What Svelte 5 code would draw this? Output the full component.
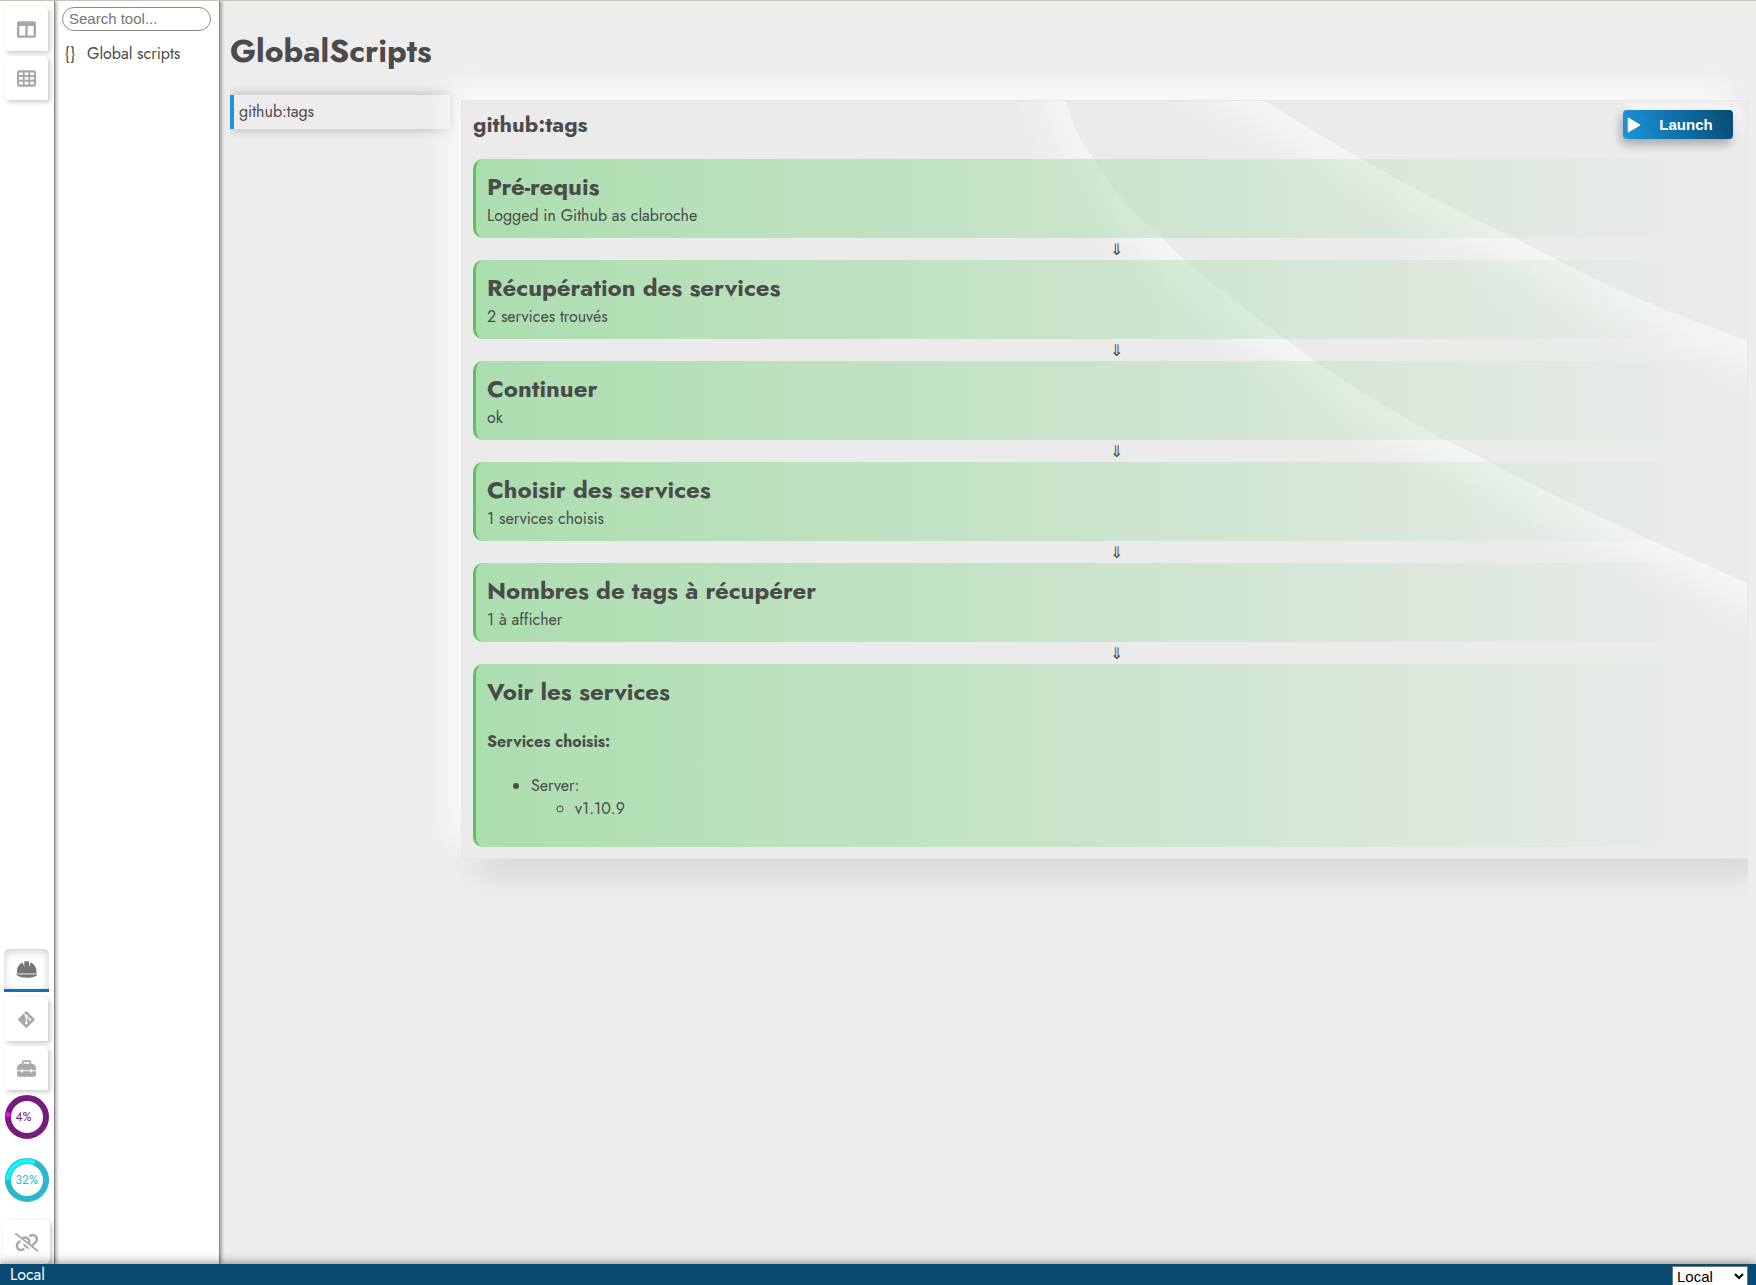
<script>
  const topTools = [
    { id: 'columns', label: 'Columns' },
    { id: 'grid', label: 'Grid' }
  ];
  const bottomTools = [
    { id: 'helmet', label: 'Toolbox', active: true },
    { id: 'git', label: 'Git' },
    { id: 'toolbox', label: 'Tools' }
  ];
  const gauges = [
    { name: 'CPU', value: 4, kind: 'cpu' },
    { name: 'Memory', value: 32, kind: 'mem' }
  ];
  const steps = [
    { title: 'Pré-requis', text: 'Logged in Github as clabroche' },
    { title: 'Récupération des services', text: '2 services trouvés' },
    { title: 'Continuer', text: 'ok' },
    { title: 'Choisir des services', text: '1 services choisis' },
    { title: 'Nombres de tags à récupérer', text: '1 à afficher' }
  ];
  let search = $state('');
  let env = $state('Local');
</script>

{#snippet icon(id)}
  {#if id === 'columns'}
    <svg class="icon" viewBox="0 0 512 512" aria-hidden="true"><path d="M464 32H48C21.49 32 0 53.49 0 80v352c0 26.51 21.49 48 48 48h416c26.51 0 48-21.49 48-48V80c0-26.51-21.49-48-48-48zM224 416H64V160h160v256zm224 0H288V160h160v256z" /></svg>
  {:else if id === 'grid'}
    <svg class="icon" viewBox="0 0 512 512" aria-hidden="true"><path fill-rule="evenodd" d="M64 32h384a64 64 0 0 1 64 64v320a64 64 0 0 1-64 64H64a64 64 0 0 1-64-64V96a64 64 0 0 1 64-64zM56 92v68h100v-68zM206 92v68h100v-68zM356 92v68h100v-68zM56 216v72h100v-72zM206 216v72h100v-72zM356 216v72h100v-72zM56 344v72h100v-72zM206 344v72h100v-72zM356 344v72h100v-72z" /></svg>
  {:else if id === 'helmet'}
    <svg class="icon" viewBox="0 0 576 512" aria-hidden="true"><path d="M248 32h80a24 24 0 0 1 24 24v142l42-134c88 36 156 120 156 230v56H26v-56c0-110 68-194 156-230l42 134V56a24 24 0 0 1 24-24z" /><path opacity=".55" d="M10 350h556v50H10z" /><path d="M0 400h576c-60 56-170 80-288 80S60 456 0 400z" /></svg>
  {:else if id === 'git'}
    <svg class="icon" viewBox="0 0 448 512" aria-hidden="true"><path d="M439.55 236.05L244 40.45a28.87 28.87 0 0 0-40.81 0l-40.66 40.63 51.52 51.52c27.06-9.14 52.68 16.77 43.39 43.68l49.66 49.66c34.23-11.8 61.18 31 35.47 56.69-26.49 26.49-70.21-2.87-56-37.34L240.22 199v121.85c25.3 12.54 22.26 41.85 9.08 55a34.34 34.34 0 0 1-48.55 0c-17.57-17.6-11.07-46.91 11.25-56v-123c-20.8-8.51-24.6-30.74-18.64-45L142.57 101 8.45 235.14a28.86 28.86 0 0 0 0 40.81l195.61 195.6a28.86 28.86 0 0 0 40.8 0l194.69-194.69a28.86 28.86 0 0 0 0-40.81z" /></svg>
  {:else if id === 'toolbox'}
    <svg class="icon" viewBox="0 0 512 512" aria-hidden="true"><path fill-rule="evenodd" d="M184 32h144a56 56 0 0 1 56 56v40h28c18 0 34 7 46 19l35 35c12 12 19 28 19 45v73H400v-12a20 20 0 0 0-40 0v12H152v-12a20 20 0 0 0-40 0v12H0v-73c0-17 7-33 19-45l35-35c12-12 28-19 46-19h28V88a56 56 0 0 1 56-56zM184 80a8 8 0 0 0-8 8v40h160V88a8 8 0 0 0-8-8z" /><path d="M0 332h112v16a20 20 0 0 0 40 0v-16h208v16a20 20 0 0 0 40 0v-16h112v84a64 64 0 0 1-64 64H64a64 64 0 0 1-64-64z" /></svg>
  {/if}
{/snippet}

<div class="app">
  <div class="body">
    <nav class="rail" aria-label="Tools">
      {#each topTools as tool}
        <button class="tile" aria-label={tool.label}>{@render icon(tool.id)}</button>
      {/each}
      <span class="spacer"></span>
      {#each bottomTools as tool}
        <button class="tile" class:active={tool.active} aria-label={tool.label}>{@render icon(tool.id)}</button>
      {/each}
      {#each gauges as g}
        <div class="gauge {g.kind}" role="img" aria-label="{g.name} {g.value}%">
          <svg viewBox="0 0 44 44" aria-hidden="true">
            <circle class="track" cx="22" cy="22" r="19" />
            <circle class="value" cx="22" cy="22" r="19" pathLength="100" stroke-dasharray="{g.value} 100" transform="rotate(180 22 22)" />
          </svg>
          <span>{g.value}%</span>
        </div>
      {/each}
      <button class="tile link" aria-label="Disconnected">
        <svg class="icon" viewBox="0 0 640 512" aria-hidden="true"><path d="M38.8 5.1C28.4-3.1 13.3-1.2 5.1 9.2S-1.2 34.7 9.2 42.9l592 464c10.4 8.2 25.5 6.3 33.7-4.1s6.3-25.5-4.1-33.7L489.3 358.2l90.5-90.5c56.5-56.5 56.5-148 0-204.5c-50-50-128.8-56.5-186.3-15.4l-1.6 1.1c-14.4 10.3-17.7 30.3-7.4 44.6s30.3 17.7 44.6 7.4l1.6-1.1c32.1-22.9 76-19.3 103.8 8.6c31.5 31.5 31.5 82.5 0 114l-96 96-31.9-25C430.9 239.6 420.1 175.1 377 132c-52.2-52.3-134.5-56.2-191.3-11.7L38.8 5.1zM239 162c30.1-14.9 67.7-9.9 92.8 15.3c20 20 27.5 48.3 21.7 74.5L239 162zM406.6 416.4L220.9 270c-2.1 39.8 12.2 80.1 42.2 110c38.9 38.9 94.4 51 143.6 36.3zm-290-228.5L60.2 244.3c-56.5 56.5-56.5 148 0 204.5c50 50 128.8 56.5 186.3 15.4l1.6-1.1c14.4-10.3 17.7-30.3 7.4-44.6s-30.3-17.7-44.6-7.4l-1.6 1.1c-32.1 22.9-76 19.3-103.8-8.6C74 372 74 321 105.5 289.5l61.8-61.8-50.6-39.9z" /></svg>
      </button>
    </nav>

    <aside class="tools">
      <input class="search" type="text" placeholder="Search tool..." aria-label="Search tool" bind:value={search} />
      <a class="tool" href="#global"><span class="brace">{'{}'}</span>Global scripts</a>
    </aside>

    <main>
      <h1>GlobalScripts</h1>
      <div class="columns">
        <nav class="scripts" aria-label="Scripts">
          <a href="#tags">github:tags</a>
        </nav>
        <section class="card">
          <svg class="waves" viewBox="0 0 1286 759" preserveAspectRatio="none" aria-hidden="true">
            <defs>
              <filter id="soft" x="-20%" y="-20%" width="140%" height="140%"><feGaussianBlur stdDeviation="20" /></filter>
              <clipPath id="below1"><path d="M604 -2C612 30 622 45 633 58C652 92 672 114 701 137C722 162 770 198 823 238C900 297 965 330 1026 361C1100 400 1190 441 1286 483V759H0V-2z" /></clipPath>
              <clipPath id="below2"><path d="M801 -2Q850 30 900 58Q975 102 1054 137Q1160 196 1286 240V759H0V-2z" /></clipPath>
            </defs>
            <g clip-path="url(#below1)"><path class="glow" filter="url(#soft)" d="M596 -60C612 30 622 45 633 58C652 92 672 114 701 137C722 162 770 198 823 238C900 297 965 330 1026 361C1100 400 1190 441 1400 533" /></g>
            <g clip-path="url(#below2)"><path class="glow" filter="url(#soft)" d="M720 -50L801 -2Q850 30 900 58Q975 102 1054 137Q1160 196 1286 240L1400 280" /></g>
          </svg>
          <header>
            <h2>github:tags</h2>
            <button class="launch">
              <svg viewBox="0 0 12 14" aria-hidden="true"><path d="M1 1l10 6-10 6z" /></svg>
              <span>Launch</span>
            </button>
          </header>
          {#each steps as step}
            <article class="step">
              <h3>{step.title}</h3>
              <p>{step.text}</p>
            </article>
            <div class="arrow">⇓</div>
          {/each}
          <article class="step last">
            <h3>Voir les services</h3>
            <h4>Services choisis:</h4>
            <ul>
              <li>Server:
                <ul><li>v1.10.9</li></ul>
              </li>
            </ul>
          </article>
        </section>
      </div>
    </main>
  </div>

  <footer>
    <span>Local</span>
    <select aria-label="Environment" bind:value={env}>
      <option>Local</option>
    </select>
  </footer>
</div>

<style>
  :global(body) {
    margin: 0;
  }
  .app {
    box-sizing: border-box;
    height: 100vh;
    display: flex;
    flex-direction: column;
    overflow: hidden;
    border-top: 1px solid #c9c2ba;
    background: #ededed;
    color: #4b4b4b;
    font: 16px/23px Jost, Lato, sans-serif;
  }
  .body {
    flex: 1;
    min-height: 0;
    display: flex;
  }
  h1, h2, h3, h4, p, ul {
    margin: 0;
  }
  a {
    color: inherit;
    text-decoration: none;
  }
  .rail {
    box-sizing: border-box;
    width: 55px;
    flex: none;
    display: flex;
    flex-direction: column;
    align-items: center;
    padding: 6px 1px 0 0;
    background: #fff;
    border-right: 1px solid #888;
    box-shadow: 1px 0 4px rgba(0, 0, 0, 0.45);
    z-index: 2;
  }
  .tile {
    box-sizing: border-box;
    width: 43px;
    height: 44px;
    flex: none;
    margin-bottom: 5px;
    padding: 0;
    display: flex;
    align-items: center;
    justify-content: center;
    border: 0;
    border-radius: 5px 5px 0 0;
    background: #fff;
    color: #a8a8a8;
    box-shadow: 2px 2px 5px rgba(0, 0, 0, 0.22);
  }
  .tile.active {
    width: 45px;
    height: 43px;
    color: #757575;
    border-bottom: 3px solid #0b72b9;
    box-shadow: inset 0 2px 8px rgba(0, 0, 0, 0.2);
  }
  .tile.link {
    width: 47px;
    margin: 18px 0 0;
    border-radius: 5px;
  }
  .spacer {
    flex: 1;
  }
  .icon {
    height: 19px;
    fill: currentColor;
  }
  .gauge {
    width: 44px;
    height: 44px;
    flex: none;
    display: grid;
    place-items: center;
    font-size: 12px;
  }
  .gauge + .gauge {
    margin-top: 19px;
  }
  .gauge > * {
    grid-area: 1 / 1;
  }
  .gauge > span {
    width: 22px;
  }
  .gauge svg {
    width: 44px;
    height: 44px;
    fill: none;
  }
  .track {
    stroke-width: 6;
  }
  .value {
    stroke-width: 4;
  }
  .cpu { color: #761c7c; }
  .cpu .track { stroke: #761c7c; }
  .cpu .value { stroke: #f0f; }
  .mem { color: #2cb7d1; }
  .mem .track { stroke: #2cb7d1; }
  .mem .value { stroke: #0ff; }

  .tools {
    box-sizing: border-box;
    width: 165px;
    flex: none;
    padding: 6px 8px 0 7px;
    background: #fff;
    border-right: 1px solid #888;
    box-shadow: 1px 0 4px rgba(0, 0, 0, 0.45);
    z-index: 1;
  }
  .search {
    box-sizing: border-box;
    display: block;
    width: 100%;
    height: 24px;
    padding: 0 6px 1px;
    border: 1px solid #8a8a8a;
    border-radius: 12px;
    background: #fff;
    font: 15px "Liberation Sans", sans-serif;
  }
  .search::placeholder {
    color: #757575;
  }
  .tool {
    display: flex;
    margin-top: 11px;
    padding-left: 3px;
  }
  .brace {
    width: 22px;
  }

  main {
    flex: 1;
    min-width: 0;
    margin-right: 8px;
    padding-left: 10px;
    overflow: hidden;
  }
  h1 {
    padding: 27px 0 21px;
    font-size: 32px;
    line-height: 46px;
  }
  .columns {
    display: flex;
    align-items: flex-start;
    gap: 11px;
    overflow-x: clip;
  }
  .scripts {
    width: 220px;
    flex: none;
  }
  .scripts a {
    display: block;
    padding: 5px 5px 6px;
    border-left: 4px solid #1b95dc;
    box-shadow: 0 0 12px rgba(0, 0, 0, 0.25);
  }
  .card {
    position: relative;
    z-index: 0;
    box-sizing: border-box;
    flex: 1;
    min-width: 0;
    margin-top: 5px;
    padding: 8px 11px 11px;
    border: 1px solid #e6e6e6;
    background: #ebebeb;
    box-shadow: -15px -15px 30px rgba(255, 255, 255, 0.8), 15px 15px 30px rgba(0, 0, 0, 0.1);
  }
  .waves {
    position: absolute;
    inset: 0;
    z-index: -1;
    width: 100%;
    height: 100%;
  }
  .glow {
    fill: none;
    stroke: #fff;
    stroke-width: 46;
    opacity: 0.65;
  }
  header {
    display: flex;
    justify-content: space-between;
    align-items: flex-start;
    height: 50px;
    padding-right: 3px;
  }
  h2 {
    font-size: 22px;
    line-height: 31px;
  }
  .launch {
    display: flex;
    align-items: center;
    width: 110px;
    height: 29px;
    margin-top: 1px;
    padding: 0 2px 0 4px;
    border: 0;
    border-radius: 4px;
    background: linear-gradient(70deg, #1b95dc, #084a72);
    box-shadow: -2px 5px 10px rgba(0, 0, 0, 0.3), 5px -5px 12px rgba(255, 255, 255, 0.8);
    color: #fff;
    font: bold 15px "Liberation Sans", sans-serif;
  }
  .launch svg {
    width: 14px;
    height: 16px;
    fill: #fff;
    stroke: #fff;
    stroke-width: 1;
    stroke-linejoin: round;
  }
  .launch span {
    flex: 1;
    text-align: center;
  }
  .step {
    box-sizing: border-box;
    min-height: 79px;
    padding: 10px 11px;
    border-left: 3px solid #5fc455;
    border-radius: 10px;
    background: linear-gradient(to right, #abdeae, rgba(171, 222, 174, 0));
  }
  h3 {
    font-size: 24px;
    line-height: 36px;
  }
  .step p {
    line-height: 22px;
  }
  .arrow {
    height: 22px;
    padding-left: 24px;
    text-align: center;
  }
  .last {
    min-height: 183px;
  }
  h4 {
    margin-top: 20px;
    font-size: 16px;
  }
  ul {
    padding-left: 44px;
  }
  h4 + ul {
    margin-top: 21px;
  }
  footer {
    position: relative;
    z-index: 3;
    flex: none;
    display: flex;
    justify-content: space-between;
    align-items: center;
    height: 21px;
    padding: 0 8px 0 10px;
    background: #084a72;
    color: #fff;
    box-shadow: 0 0 12px rgba(0, 0, 0, 0.5);
  }
  select {
    width: 76px;
    height: 20px;
    margin-top: 2px;
    padding: 0;
    border: 1px solid #767676;
    background: #fff;
    color: #000;
    font: 15px "Liberation Sans", sans-serif;
  }
</style>
